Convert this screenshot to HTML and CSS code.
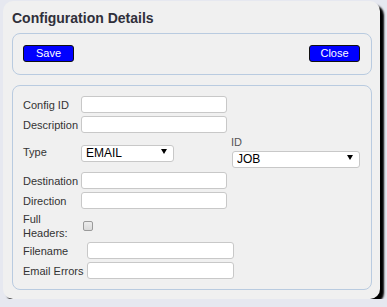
FILE: index.html
```html
<!DOCTYPE html>
<html lang="en">
  <head>
    <meta charset="utf-8" />
    <title>Configuration Details</title>
    <link rel="stylesheet" href="styles.css">
  </head>
  <body>
    <div class="dialog">
      <h1 class="dialog-title">Configuration Details</h1>

      <div class="panel button-bar">
        <button class="btn">Save</button>
        <button class="btn">Close</button>
      </div>

      <div class="panel form-panel">
        <div class="group group-a">
          <div class="row">
            <label>Config ID</label>
            <input type="text">
          </div>
          <div class="row">
            <label>Description</label>
            <input type="text">
          </div>
          <div class="row row-type">
            <label>Type</label>
            <span class="select select-type">
              <select><option>EMAIL</option></select>
            </span>
            <div class="id-field">
              <label>ID</label>
              <span class="select select-id">
                <select><option>JOB</option></select>
              </span>
            </div>
          </div>
          <div class="row">
            <label>Destination</label>
            <input type="text">
          </div>
          <div class="row">
            <label>Direction</label>
            <input type="text">
          </div>
          <div class="row row-check">
            <label>Full Headers:</label>
            <input type="checkbox">
          </div>
        </div>

        <div class="group group-b">
          <div class="row">
            <label>Filename</label>
            <input type="text">
          </div>
          <div class="row">
            <label>Email Errors</label>
            <input type="text">
          </div>
        </div>
      </div>
    </div>
  </body>
</html>
```

FILE: styles.css
```css
body {
  margin: 0;
  background-color: #e6e8f0;
  font-family: "Liberation Sans", Arial, sans-serif;
  color: #333;
}

.dialog {
  width: 360px;
  margin: 1px 0 0 3px;
  padding: 8px 8px 9px 9px;
  background-color: #f0f0f0;
  border-radius: 10px;
  box-shadow: 4px 4px 2px #000;
}

.dialog-title {
  margin: 0 0 6px 0;
  font-size: 14px;
  line-height: 18px;
  font-weight: bold;
  color: #2f2f3a;
}

.panel {
  border: 1px solid #b9cbe0;
  border-radius: 8px;
}

.button-bar {
  display: flex;
  justify-content: space-between;
  padding: 11px 11px 12px 10px;
  margin-bottom: 10px;
}

.btn {
  width: 51px;
  height: 17px;
  padding: 0;
  background-color: #0000ff;
  color: #fff;
  border: 1px solid #111;
  border-radius: 3px;
  font-family: "Liberation Sans", Arial, sans-serif;
  font-size: 11px;
  line-height: 15px;
  cursor: pointer;
}

.form-panel {
  padding: 10px 10px 10px 10px;
}

.row {
  display: flex;
  align-items: center;
  margin-bottom: 3px;
}

.row label {
  flex: none;
  font-size: 11px;
  color: #333;
}

.group-a .row > label {
  width: 58px;
}

.group-b .row > label {
  width: 64px;
}

input[type="text"] {
  box-sizing: border-box;
  width: 146px;
  height: 17px;
  margin: 0;
  padding: 0 4px;
  background-color: #fff;
  border: 1px solid #c8c8c8;
  border-radius: 3px;
  font-size: 12px;
}

.group-b input[type="text"] {
  width: 147px;
}

.row-type {
  margin-top: 1px;
  margin-bottom: 4px;
}

.select {
  position: relative;
  display: inline-block;
}

.select::after {
  content: "";
  position: absolute;
  right: 7px;
  top: 6px;
  border-left: 3px solid transparent;
  border-right: 3px solid transparent;
  border-top: 5px solid #000;
  pointer-events: none;
}

.select select {
  appearance: none;
  -webkit-appearance: none;
  box-sizing: border-box;
  height: 17px;
  margin: 0;
  padding: 0 4px;
  background-color: #fff;
  border: 1px solid #c8c8c8;
  border-radius: 3px;
  font-family: "Liberation Sans", Arial, sans-serif;
  font-size: 12px;
  line-height: 15px;
  color: #000;
}

.select-type select {
  width: 93px;
}

.select-id select {
  width: 128px;
}

.id-field {
  display: flex;
  flex-direction: column;
  margin-left: 57px;
}

.id-field label {
  line-height: 13px;
  color: #555;
}

.id-field .select {
  margin-left: 1px;
}

.row-check {
  margin-bottom: 2px;
}

.row-check label {
  line-height: 14px;
}

.row-check input {
  appearance: none;
  -webkit-appearance: none;
  width: 10px;
  height: 10px;
  margin: 0 0 0 2px;
  background: linear-gradient(#ececec, #dadada);
  border: 1px solid #9a9a9a;
  border-radius: 2px;
}

.group-b .row:last-child {
  margin-bottom: 0;
}
```
